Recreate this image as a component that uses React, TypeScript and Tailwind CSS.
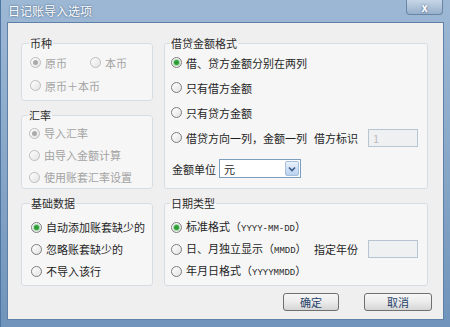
import { ReactNode } from 'react';

// Win7 风格的单选按钮
function Radio({ label, checked, disabled }: { label: ReactNode; checked?: boolean; disabled?: boolean }) {
  return (
    <label className="flex items-center gap-[4px] whitespace-nowrap">
      <span
        className={`w-[11px] h-[11px] shrink-0 rounded-full border flex items-center justify-center bg-gradient-to-br from-white to-[#e3e3e3] ${
          disabled ? 'border-[#bdbdbd]' : 'border-[#7d7d7d]'
        }`}
      >
        {checked && (
          <span
            className={`w-[5px] h-[5px] rounded-full ${
              disabled ? 'bg-[#aaaaaa]' : 'bg-[#2f9d37] shadow-[0_0_0_1px_#a8dcae]'
            }`}
          />
        )}
      </span>
      <span className={disabled ? 'text-[#a3a3a3]' : 'text-[#1f1f1f]'}>{label}</span>
    </label>
  );
}

function Group({ title, className = '', children }: { title: string; className?: string; children: ReactNode }) {
  return (
    <fieldset className={`min-w-0 border border-[#d6dde4] rounded-[3px] bg-[#f6f6f6] ${className}`}>
      <legend className="-ml-[1px] px-[1px] text-[11px] leading-[14px] text-[#2c2c2c]">{title}</legend>
      {children}
    </fieldset>
  );
}

function Field({ value }: { value?: string }) {
  return (
    <div className="w-[50px] h-[18px] shrink-0 border border-[#b7c5d3] bg-[#eef0f2] pl-[4px] flex items-center text-[#bdbdbd]">
      {value}
    </div>
  );
}

// 括号里的日期格式用等宽小字
function Fmt({ children }: { children: string }) {
  return <span className="font-['Liberation_Mono',monospace] text-[9px]">{children}</span>;
}

export default function App() {
  return (
    <div className="w-[450px] h-[327px] flex flex-col bg-gradient-to-b from-[#9db8d5] via-[#88a7c8] to-[#6f93ba] border-l border-[#4d76a2] font-['Noto_Sans_CJK_SC',sans-serif] text-[11px] leading-[14px]">
      {/* 标题栏 */}
      <div className="h-[22px] shrink-0 flex items-start justify-between pl-[7px] pr-[7px]">
        <span className="mt-[4px] text-[12px] leading-[14px] text-white [text-shadow:0_0_2px_#2c4a6b]">日记账导入选项</span>
        <span className="w-[37px] h-[15px] rounded-b-[4px] border border-t-0 border-[#6a86a6] bg-gradient-to-b from-[#c6d6e7] to-[#97afca] flex items-center justify-center text-white text-[11px] font-bold leading-none [text-shadow:0_0_2px_#3d5877]">
          x
        </span>
      </div>

      {/* 客户区 */}
      <div className="mx-[6px] h-[298px] shrink-0 bg-[#efefef] border border-[#5f81a8] pt-[13px] pl-[13px] pr-[11px] flex flex-col">
        <div className="grid grid-cols-[132px_264px] gap-x-[11px] gap-y-[7px]">
          <div className="flex flex-col gap-[7px]">
            <Group title="币种" className="px-[8px] pb-[3px]">
              <div className="pt-[1px] flex flex-col">
                <div className="h-[23px] flex items-center">
                  <div className="w-[60px]">
                    <Radio label="原币" checked disabled />
                  </div>
                  <Radio label="本币" disabled />
                </div>
                <div className="h-[23px] flex items-center">
                  <Radio label="原币＋本币" disabled />
                </div>
              </div>
            </Group>
            <Group title="汇率" className="px-[7px]">
              <div className="flex flex-col">
                <div className="h-[22px] flex items-center">
                  <Radio label="导入汇率" checked disabled />
                </div>
                <div className="h-[22px] flex items-center">
                  <Radio label="由导入金额计算" disabled />
                </div>
                <div className="h-[22px] flex items-center">
                  <Radio label="使用账套汇率设置" disabled />
                </div>
              </div>
            </Group>
          </div>

          <Group title="借贷金额格式" className="px-[6px] pb-[6px]">
            <div className="flex flex-col">
              <div className="h-[25px] flex items-center">
                <Radio label="借、贷方金额分别在两列" checked />
              </div>
              <div className="h-[25px] flex items-center">
                <Radio label="只有借方金额" />
              </div>
              <div className="h-[25px] flex items-center">
                <Radio label="只有贷方金额" />
              </div>
              <div className="h-[25px] flex items-center pr-[3px]">
                <Radio label="借贷方向一列，金额一列" />
                <span className="ml-auto shrink-0 whitespace-nowrap text-[#1f1f1f]">借方标识</span>
                <div className="ml-[10px]">
                  <Field value="1" />
                </div>
              </div>
              <div className="mt-[6px] h-[25px] flex items-center pl-[1px]">
                <span className="text-[#1f1f1f]">金额单位</span>
                <div className="ml-[3px] w-[82px] h-[19px] border border-[#7c9ebe] bg-white flex items-center">
                  <span className="flex-1 pl-[4px] text-[#1f1f1f]">元</span>
                  <span className="w-[14px] h-[15px] mr-[1px] rounded-[2px] border border-[#a6bfdb] bg-gradient-to-b from-[#eaf2fc] to-[#b8d0ee] flex items-center justify-center">
                    <svg width="8" height="6" viewBox="0 0 8 6">
                      <path d="M1 1.5 L4 4.5 L7 1.5" fill="none" stroke="#3b5b86" strokeWidth="1.6" />
                    </svg>
                  </span>
                </div>
              </div>
            </div>
          </Group>

          <Group title="基础数据" className="px-[9px] pb-[3px]">
            <div className="pt-[6px] flex flex-col">
              <div className="h-[22px] flex items-center">
                <Radio label="自动添加账套缺少的" checked />
              </div>
              <div className="h-[22px] flex items-center">
                <Radio label="忽略账套缺少的" />
              </div>
              <div className="h-[22px] flex items-center">
                <Radio label="不导入该行" />
              </div>
            </div>
          </Group>

          <Group title="日期类型" className="px-[6px] pb-[3px]">
            <div className="pt-[6px] flex flex-col">
              <div className="h-[22px] flex items-center">
                <Radio label={<>标准格式（<Fmt>YYYY-MM-DD</Fmt>）</>} checked />
              </div>
              <div className="h-[22px] flex items-center pr-[3px]">
                <Radio label={<>日、月独立显示（<Fmt>MMDD</Fmt>）</>} />
                <span className="ml-auto shrink-0 whitespace-nowrap text-[#1f1f1f]">指定年份</span>
                <div className="ml-[10px]">
                  <Field />
                </div>
              </div>
              <div className="h-[22px] flex items-center">
                <Radio label={<>年月日格式（<Fmt>YYYYMMDD</Fmt>）</>} />
              </div>
            </div>
          </Group>
        </div>

        <div className="mt-[7px] flex justify-end gap-[25px]">
          <button className="w-[56px] h-[18px] rounded-[3px] border border-[#707070] bg-gradient-to-b from-[#f7f7f7] via-[#ebebeb] to-[#d5d5d5] text-[11px] leading-none text-[#27436a]">
            确定
          </button>
          <button className="w-[68px] h-[18px] rounded-[3px] border border-[#707070] bg-gradient-to-b from-[#f7f7f7] via-[#ebebeb] to-[#d5d5d5] text-[11px] leading-none text-[#27436a]">
            取消
          </button>
        </div>
      </div>
    </div>
  );
}
